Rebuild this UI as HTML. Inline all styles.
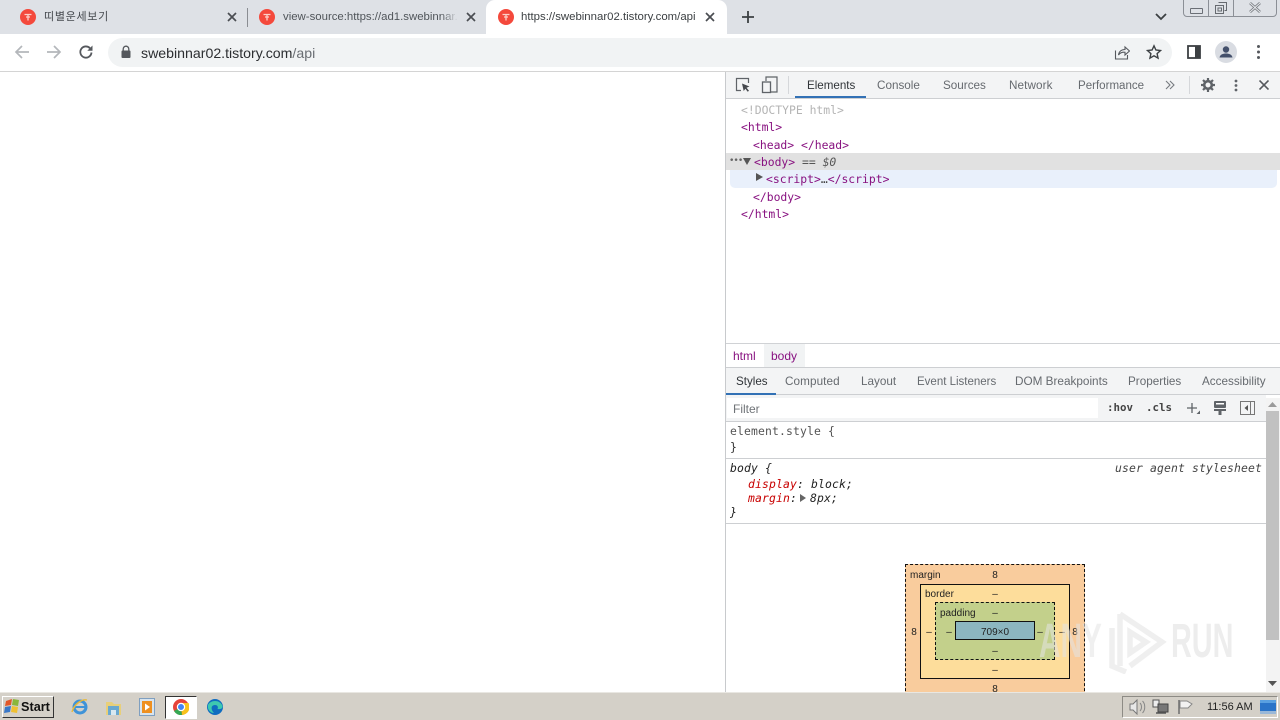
<!DOCTYPE html>
<html lang="en"><head><meta charset="utf-8"><title>swebinnar02</title>
<style>
html,body{margin:0;padding:0;background:#fff}
#p{position:relative;width:1280px;height:720px;overflow:hidden;background:#fff;font-family:"Liberation Sans",sans-serif;font-size:11.7px;color:#666a6f}
#p div,#p span.t,#p svg{position:absolute}
.t{position:absolute;white-space:nowrap;line-height:14px}
.m{font-family:"DejaVu Sans Mono",monospace;font-size:11.4px;line-height:14px;white-space:nowrap;position:absolute}
.s{letter-spacing:.14px}
.pu{color:#881280}.g{color:#a8a8a8}
.tab{font-size:12px;color:#555b62}
.bx{font-size:10px;color:#222;text-align:center;width:20px;margin-left:-10px}
.lb{font-size:10px;color:#222}
</style></head><body>
<div id="p">
<!-- tab strip -->
<div style="left:0;top:0;width:1280px;height:34px;background:#dee1e6"></div>
<div style="left:0;top:34px;width:1280px;height:37px;background:#fff"></div>
<div style="left:0;top:71px;width:1280px;height:1px;background:#d4d4d4"></div>
<div style="left:486px;top:0;width:241px;height:36px;background:#fff;border-radius:9px 9px 0 0"></div>
<div style="left:247px;top:8px;width:1px;height:19px;background:#8a8d92"></div>

<svg style="left:20px;top:9px" width="16" height="16" viewBox="0 0 16 16"><circle cx="8" cy="8" r="8" fill="#f4493c"/><path d="M4.500 5.500h7M8 5.500v6M6 8h4" stroke="#fcd0c8" stroke-width="1.300" fill="none"/></svg>
<span class="t" style="left:44px;top:10px;font-family:'Liberation Sans','Noto Sans CJK KR',sans-serif;font-size:11px;color:#45494e;letter-spacing:.7px">띠별운세보기</span>
<svg style="left:227px;top:12px" width="10" height="10" viewBox="0 0 10 10"><path d="M1 1l8 8M9 1l-8 8" stroke="#4a4d52" stroke-width="1.700"/></svg>

<svg style="left:259px;top:9px" width="16" height="16" viewBox="0 0 16 16"><circle cx="8" cy="8" r="8" fill="#f4493c"/><path d="M4.500 5.500h7M8 5.500v6M6 8h4" stroke="#fcd0c8" stroke-width="1.300" fill="none"/></svg>
<span class="t tab" style="left:283px;top:10px;font-size:11.400px;width:174px;overflow:hidden;color:#50555a">view-source:https://ad1.swebinnar.</span>
<div style="left:441px;top:6px;width:17px;height:22px;background:linear-gradient(90deg,rgba(222,225,230,0),#dee1e6)"></div>
<svg style="left:466px;top:12px" width="10" height="10" viewBox="0 0 10 10"><path d="M1 1l8 8M9 1l-8 8" stroke="#4a4d52" stroke-width="1.700"/></svg>

<svg style="left:498px;top:9px" width="16" height="16" viewBox="0 0 16 16"><circle cx="8" cy="8" r="8" fill="#f4493c"/><path d="M4.500 5.500h7M8 5.500v6M6 8h4" stroke="#fcd0c8" stroke-width="1.300" fill="none"/></svg>
<span class="t" style="left:521px;top:10px;font-size:11.400px;color:#3c4043">https://swebinnar02.tistory.com/api</span>
<svg style="left:705px;top:12px" width="10" height="10" viewBox="0 0 10 10"><path d="M1 1l8 8M9 1l-8 8" stroke="#4a4d52" stroke-width="1.700"/></svg>
<svg style="left:741px;top:10px" width="14" height="14" viewBox="0 0 14 14"><path d="M7 1v12M1 7h12" stroke="#3c4043" stroke-width="1.800"/></svg>
<svg style="left:1155px;top:13px" width="12" height="8" viewBox="0 0 12 8"><path d="M1 1l5 5 5-5" stroke="#3c4043" stroke-width="1.800" fill="none"/></svg>

<!-- window controls -->
<div style="left:1183px;top:-1px;width:92px;height:16px;border:1px solid #8b8f96;border-radius:0 0 4px 4px;background:#dee1e6"></div>
<div style="left:1208px;top:0;width:1px;height:16px;background:#8b8f96"></div>
<div style="left:1233px;top:0;width:1px;height:16px;background:#8b8f96"></div>
<div style="left:1190px;top:8px;width:11px;height:4px;border:1px solid #6b6f76;border-radius:1px"></div>
<svg style="left:1214px;top:1px" width="14" height="14" viewBox="0 0 14 14"><path d="M4.500 1.500h8v8h-2M1.500 4.500h8v8h-8zM4 7h3.500v3H4z" stroke="#666a70" fill="none"/></svg>
<svg style="left:1248px;top:1px" width="14" height="13" viewBox="0 0 14 13"><path d="M2 2l10 9M12 2L2 11" stroke="#777b80" stroke-width="2.600"/><path d="M2 2l10 9M12 2L2 11" stroke="#e8eaed" stroke-width="1"/></svg>

<!-- toolbar -->
<svg style="left:14px;top:44px" width="16" height="16" viewBox="0 0 16 16"><path d="M15 8H2M8 2L2 8l6 6" stroke="#b4b7bb" stroke-width="1.700" fill="none"/></svg>
<svg style="left:46px;top:44px" width="16" height="16" viewBox="0 0 16 16"><path d="M1 8h13M8 2l6 6-6 6" stroke="#b4b7bb" stroke-width="1.700" fill="none"/></svg>
<svg style="left:78px;top:44px" width="16" height="16" viewBox="0 0 16 16"><path d="M13.500 8.500A5.600 5.600 0 1 1 12 4.200" stroke="#55585d" stroke-width="1.800" fill="none"/><path d="M14.500 1.500v5.200H9.300z" fill="#55585d"/></svg>
<div style="left:108px;top:38px;width:1064px;height:29px;background:#f1f3f4;border-radius:15px"></div>
<svg style="left:120px;top:45px" width="12" height="14" viewBox="0 0 12 14"><path d="M3.200 6V4a2.800 2.800 0 0 1 5.600 0v2" stroke="#55585d" stroke-width="1.300" fill="none"/><rect x="1.500" y="5.500" width="9" height="7.500" rx="1" fill="#55585d"/></svg>
<span class="t" style="left:141px;top:45px;font-size:14.150px;line-height:16px;color:#2c2e31">swebinnar02.tistory.com<span style="color:#6a6e73">/api</span></span>
<svg style="left:1114px;top:44px" width="16" height="16" viewBox="0 0 16 16"><path d="M1.500 6.500v8.500h12V11M4.500 11c.5-3.500 3-5.500 6.500-5.500V3l4.500 4-4.500 4V8.300C8.500 8 6 9 4.500 11z" stroke="#55585d" stroke-width="1.100" fill="none"/></svg>
<svg style="left:1146px;top:44px" width="16" height="16" viewBox="0 0 16 16"><path d="M8 1.800l1.900 4.200 4.600.5-3.400 3.100.95 4.500L8 11.800 3.950 14.100l.95-4.500L1.500 6.500l4.600-.5z" stroke="#3c4043" stroke-width="1.400" fill="none"/></svg>
<svg style="left:1187px;top:45px" width="14" height="14" viewBox="0 0 14 14"><rect x="1" y="1" width="12" height="12" fill="none" stroke="#3c4043" stroke-width="1.800"/><rect x="8" y="1" width="5" height="12" fill="#3c4043"/></svg>
<svg style="left:1215px;top:41px" width="22" height="22" viewBox="0 0 22 22"><circle cx="11" cy="11" r="11" fill="#d9dce2"/><circle cx="11" cy="8.500" r="3.200" fill="#44506b"/><path d="M4.500 16.500c.5-3 3.500-4 6.500-4s6 1 6.500 4z" fill="#44506b"/></svg>
<svg style="left:1256px;top:44px" width="5" height="16" viewBox="0 0 5 16"><circle cx="2.500" cy="2.500" r="1.500" fill="#55585d"/><circle cx="2.500" cy="8" r="1.500" fill="#55585d"/><circle cx="2.500" cy="13.500" r="1.500" fill="#55585d"/></svg>

<!-- devtools -->
<div style="left:725px;top:72px;width:1px;height:620px;background:#c8cacd"></div>
<div style="left:726px;top:72px;width:554px;height:26px;background:#f3f4f5"></div>
<div style="left:726px;top:98px;width:554px;height:1px;background:#cdcfd2"></div>
<svg style="left:735px;top:77px" width="16" height="16" viewBox="0 0 16 16"><path d="M6 13.500H1.500v-12h12V6" stroke="#5f6368" stroke-width="1.200" fill="none"/><path d="M7 6.500l7.500 3-3 1.200 2.500 3-1.300 1-2.300-3-1.700 2.300z" fill="#45484d"/></svg>
<svg style="left:761px;top:76px" width="18" height="18" viewBox="0 0 18 18"><path d="M5 5V1h11v15H10" stroke="#5f6368" stroke-width="1.200" fill="none"/><rect x="1.500" y="6" width="8" height="10.500" fill="none" stroke="#5f6368" stroke-width="1.300"/></svg>
<div style="left:788px;top:76px;width:1px;height:18px;background:#d5d7da"></div>
<span class="t" style="left:807px;top:79px;color:#303438;font-size:11.600px">Elements</span>
<div style="left:795px;top:96px;width:71px;height:2px;background:#3271b5"></div>
<span class="t" style="left:877px;top:79px">Console</span>
<span class="t" style="left:943px;top:79px">Sources</span>
<span class="t" style="left:1009px;top:79px;letter-spacing:.1px">Network</span>
<span class="t" style="left:1078px;top:79px;font-size:11.550px">Performance</span>
<svg style="left:1165px;top:80px" width="10" height="10" viewBox="0 0 10 10"><path d="M1 1l4 4-4 4M5 1l4 4-4 4" stroke="#777b80" stroke-width="1.100" fill="none"/></svg>
<div style="left:1189px;top:76px;width:1px;height:18px;background:#d5d7da"></div>
<svg style="left:1201px;top:78px" width="14" height="14" viewBox="0 0 14 14"><circle cx="7" cy="7" r="3.800" fill="none" stroke="#5f6368" stroke-width="2.600"/><path d="M7 0v3M7 11v3M0 7h3M11 7h3M2 2l2 2M10 10l2 2M12 2l-2 2M4 10l-2 2" stroke="#5f6368" stroke-width="2.200"/></svg>
<svg style="left:1234px;top:79px" width="4" height="13" viewBox="0 0 4 13"><circle cx="2" cy="2" r="1.400" fill="#5f6368"/><circle cx="2" cy="6.500" r="1.400" fill="#5f6368"/><circle cx="2" cy="11" r="1.400" fill="#5f6368"/></svg>
<svg style="left:1259px;top:80px" width="10" height="10" viewBox="0 0 10 10"><path d="M.5.500l9 9M9.500.500l-9 9" stroke="#55585d" stroke-width="1.600"/></svg>

<!-- DOM tree -->
<div style="left:726px;top:153px;width:554px;height:17px;background:#e1e1e1"></div>
<div style="left:730px;top:170px;width:547px;height:18px;background:#e9f0fb;border-radius:0 0 5px 5px"></div>
<span class="m g" style="left:741px;top:103px;color:#b4b4b4">&lt;!DOCTYPE html&gt;</span>
<span class="m pu" style="left:741px;top:120px">&lt;html&gt;</span>
<span class="m pu" style="left:753px;top:138px">&lt;head&gt; &lt;/head&gt;</span>
<span class="m" style="left:729px;top:154px;color:#666;font-size:9px;letter-spacing:-1px">•••</span>
<svg style="left:743px;top:158px" width="8" height="7" viewBox="0 0 8 7"><path d="M0 0h8L4 7z" fill="#555"/></svg>
<span class="m pu" style="left:754px;top:155px">&lt;body&gt;</span>
<span class="m" style="left:802px;top:155px;color:#555">== <i>$0</i></span>
<svg style="left:756px;top:173px" width="7" height="8" viewBox="0 0 7 8"><path d="M0 0l7 4-7 4z" fill="#555"/></svg>
<span class="m pu" style="left:766px;top:172px">&lt;script&gt;<span style="color:#444">…</span>&lt;/script&gt;</span>
<span class="m pu" style="left:753px;top:190px">&lt;/body&gt;</span>
<span class="m pu" style="left:741px;top:207px">&lt;/html&gt;</span>

<!-- breadcrumb -->
<div style="left:726px;top:343px;width:554px;height:1px;background:#d0d2d5"></div>
<div style="left:764px;top:344px;width:41px;height:23px;background:#f1f3f4"></div>
<span class="t" style="left:733px;top:349px;color:#881280;font-size:12px">html</span>
<span class="t" style="left:771px;top:349px;color:#881280;font-size:12px">body</span>
<div style="left:726px;top:367px;width:554px;height:1px;background:#cdcfd2"></div>

<!-- sub tabs -->
<div style="left:726px;top:368px;width:554px;height:26px;background:#f3f4f5"></div>
<div style="left:726px;top:394px;width:554px;height:1px;background:#cdcfd2"></div>
<div style="left:726px;top:393px;width:50px;height:2px;background:#3271b5"></div>
<span class="t" style="left:736px;top:375px;color:#303438;font-size:11.600px">Styles</span>
<span class="t" style="left:785px;top:375px;letter-spacing:.1px">Computed</span>
<span class="t" style="left:861px;top:375px">Layout</span>
<span class="t" style="left:917px;top:375px;font-size:11.500px">Event Listeners</span>
<span class="t" style="left:1015px;top:375px;font-size:11.750px">DOM Breakpoints</span>
<span class="t" style="left:1128px;top:375px;font-size:11.700px">Properties</span>
<span class="t" style="left:1202px;top:375px;font-size:11.700px">Accessibility</span>

<!-- filter -->
<div style="left:726px;top:395px;width:540px;height:26px;background:#f3f4f5"></div>
<div style="left:727px;top:398px;width:371px;height:20px;background:#fff"></div>
<span class="t" style="left:733px;top:402px;color:#6f7377;font-size:12px">Filter</span>
<span class="m" style="left:1107px;top:401px;color:#444;font-size:10.800px;font-weight:bold">:hov</span>
<span class="m" style="left:1146px;top:401px;color:#444;font-size:10.800px;font-weight:bold">.cls</span>
<svg style="left:1186px;top:401px" width="18" height="17" viewBox="0 0 18 17"><path d="M6 2v10M1 7h10" stroke="#5f6368" stroke-width="1.300"/><path d="M14 13h-3.500l3.500-3.500z" fill="#5f6368"/></svg>
<svg style="left:1213px;top:400px" width="14" height="16" viewBox="0 0 14 16"><rect x="1" y="1" width="12" height="7" rx="1" fill="#5f6368"/><rect x="3" y="3" width="8" height="1.500" fill="#fff"/><path d="M1 9h12v2H1zM5.500 11h3v4h-3z" fill="#5f6368"/></svg>
<svg style="left:1240px;top:401px" width="15" height="14" viewBox="0 0 15 14"><rect x=".5" y=".5" width="14" height="13" fill="none" stroke="#777"/><path d="M10.500.5v13" stroke="#777"/><path d="M8 4v6L4.500 7z" fill="#555"/></svg>
<div style="left:726px;top:421px;width:540px;height:1px;background:#cdcfd2"></div>

<!-- styles -->
<span class="m s" style="left:730px;top:424px;color:#555">element.style {</span>
<span class="m" style="left:730px;top:440px;color:#333">}</span>
<div style="left:726px;top:458px;width:540px;height:1px;background:#cdcfd2"></div>
<span class="m s" style="left:730px;top:461px;color:#222;font-style:italic">body {</span>
<span class="m s" style="left:1115px;top:461px;color:#444;font-style:italic">user agent stylesheet</span>
<span class="m s" style="left:748px;top:477px;color:#222;font-style:italic"><span style="color:#c80000">display</span>: block;</span>
<span class="m s" style="left:748px;top:491px;color:#222;font-style:italic"><span style="color:#c80000">margin</span>:</span>
<svg style="left:800px;top:494px" width="6" height="8" viewBox="0 0 6 8"><path d="M0 0l6 4-6 4z" fill="#666"/></svg>
<span class="m s" style="left:810px;top:491px;color:#222;font-style:italic">8px;</span>
<span class="m" style="left:730px;top:505px;color:#222;font-style:italic">}</span>
<div style="left:726px;top:523px;width:540px;height:1px;background:#cdcfd2"></div>

<!-- box model -->
<div style="left:905px;top:564px;width:178px;height:140px;background:#f9cc9d;border:1px dashed #111"></div>
<div style="left:920px;top:584px;width:148px;height:93px;background:#fddd9b;border:1px solid #111"></div>
<div style="left:935px;top:602px;width:118px;height:56px;background:#c3d08b;border:1px dashed #111"></div>
<div style="left:955px;top:621px;width:78px;height:17px;background:#8cb6c0;border:1px solid #111"></div>
<span class="t lb" style="left:910px;top:569px">margin</span>
<span class="t lb" style="left:925px;top:588px">border</span>
<span class="t lb" style="left:940px;top:607px">padding</span>
<span class="t lb" style="left:981px;top:626px">709×0</span>
<span class="t bx" style="left:995px;top:569px">8</span>
<span class="t bx" style="left:995px;top:588px">–</span>
<span class="t bx" style="left:995px;top:607px">–</span>
<span class="t bx" style="left:995px;top:645px">–</span>
<span class="t bx" style="left:995px;top:664px">–</span>
<span class="t bx" style="left:995px;top:683px">8</span>
<span class="t bx" style="left:914px;top:626px">8</span>
<span class="t bx" style="left:929px;top:626px">–</span>
<span class="t bx" style="left:949px;top:626px">–</span>
<span class="t bx" style="left:1040px;top:626px">–</span>
<span class="t bx" style="left:1062px;top:626px">–</span>
<span class="t bx" style="left:1075px;top:626px">8</span>

<!-- scrollbar -->
<div style="left:1266px;top:398px;width:14px;height:294px;background:#f3f3f3"></div>
<div style="left:1266px;top:411px;width:13px;height:229px;background:#c1c1c1"></div>
<svg style="left:1268px;top:402px" width="9" height="5" viewBox="0 0 9 5"><path d="M4.500 0L9 5H0z" fill="#9a9a9a"/></svg>
<svg style="left:1268px;top:681px" width="9" height="5" viewBox="0 0 9 5"><path d="M0 0h9L4.500 5z" fill="#555"/></svg>

<!-- watermark -->
<span class="t" style="left:1039px;top:618px;font-size:48px;line-height:48px;color:rgba(228,228,228,.55);transform:scaleX(.62);transform-origin:0 0;font-weight:bold">ANY</span>
<span class="t" style="left:1171px;top:618px;font-size:48px;line-height:48px;color:rgba(205,205,205,.36);transform:scaleX(.6);transform-origin:0 0;font-weight:bold">RUN</span>
<svg style="left:1106px;top:608px" width="62" height="66" viewBox="0 0 62 66"><path d="M14 6v52M14 6l42 28-32 24M6 20v38l14 6M24 24l16 10-16 11z" stroke="rgba(205,205,205,.32)" stroke-width="5.500" fill="none"/></svg>

<!-- taskbar -->
<div style="left:0;top:692px;width:1280px;height:28px;background:#d4d0c8"></div>
<div style="left:0;top:692px;width:1280px;height:1px;background:#e9e7e2"></div>
<div style="left:2px;top:696px;width:50px;height:20px;background:#d4d0c8;border:1px solid;border-color:#fff #333 #333 #fff"></div>
<svg style="left:4px;top:698px" width="17" height="17" viewBox="0 0 17 17"><path d="M2 3l6-2-1 6-6 1z" fill="#e2582a"/><path d="M9 1l6 1-1 6-6-1z" fill="#8ab63a"/><path d="M1 9l6-1-1 6-6 1z" fill="#3a78c8"/><path d="M8 8l6 1-1 6-6-1z" fill="#f0c030"/></svg>
<span class="t" style="left:21px;top:700px;font-size:12.700px;font-weight:bold;color:#111">Start</span>
<svg style="left:71px;top:698px" width="18" height="18" viewBox="0 0 18 18"><circle cx="9" cy="9" r="6" fill="none" stroke="#3f93d8" stroke-width="3"/><path d="M4 9h10" stroke="#3f93d8" stroke-width="2"/><path d="M1 14C3 6 11 1 16 2" stroke="#e8b93a" stroke-width="1.400" fill="none"/></svg>
<svg style="left:105px;top:698px" width="17" height="18" viewBox="0 0 17 18"><path d="M1 4h6l2 2h7v11H1z" fill="#e8cf7a"/><rect x="3" y="8" width="11" height="9" fill="#6aa8d0"/><rect x="6" y="12" width="5" height="5" fill="#d8e8f0"/></svg>
<svg style="left:139px;top:698px" width="16" height="18" viewBox="0 0 16 18"><rect x=".5" y=".5" width="15" height="17" fill="#d8e4ee" stroke="#7f9fc0"/><rect x="3" y="3" width="10" height="12" fill="#ee9020"/><path d="M6 5.500l5 3.500-5 3.500z" fill="#fff"/></svg>
<div style="left:165px;top:696px;width:30px;height:21px;background:#fff;border:1px solid;border-color:#333 #fff #fff #333"></div>
<svg style="left:173px;top:699px" width="16" height="16" viewBox="0 0 16 16"><circle cx="8" cy="8" r="8" fill="#e5433a"/><path d="M8 8L1 12a8 8 0 0 0 8 4z" fill="#35a853"/><path d="M8 4h7.500a8 8 0 0 1-6.500 12z" fill="#f8c21c"/><circle cx="8" cy="8" r="3.600" fill="#4285f4" stroke="#fff" stroke-width="1.200"/></svg>
<svg style="left:207px;top:699px" width="16" height="16" viewBox="0 0 16 16"><circle cx="8" cy="8" r="8" fill="#0f6cc0"/><path d="M1 6C3 1 13 0 15.500 7c.5 3-3 3.500-5 3C12 7 9 5 6 6.500 4 7.500 4 11 7 14 3 14 0 10 1 6z" fill="#3ec8b0"/></svg>

<!-- tray -->
<div style="left:1122px;top:696px;width:154px;height:20px;border:1px solid;border-color:#8d8b85 #fff #fff #8d8b85"></div>
<svg style="left:1128px;top:699px" width="18" height="16" viewBox="0 0 18 16"><path d="M2 5h3l4-4v14l-4-4H2z" fill="#e8e8e8" stroke="#777"/><path d="M12 4c2 2 2 6 0 8M14.500 2c3 3 3 9 0 12" stroke="#888" fill="none"/></svg>
<svg style="left:1152px;top:699px" width="18" height="16" viewBox="0 0 18 16"><rect x="1" y="1" width="6" height="7" fill="#eee" stroke="#555"/><rect x="6" y="5" width="10" height="8" fill="#777" stroke="#444"/><path d="M4 14h10" stroke="#555" stroke-width="1.500"/></svg>
<svg style="left:1177px;top:699px" width="17" height="16" viewBox="0 0 17 16"><path d="M2 1v14" stroke="#666" stroke-width="1.400"/><path d="M3 2h7l5 3-4 4H3z" fill="#f2f2f2" stroke="#888"/></svg>
<span class="t" style="left:1207px;top:700px;font-size:11px;color:#222">11:56 AM</span>
<svg style="left:1260px;top:700px" width="16" height="14" viewBox="0 0 16 14"><rect width="16" height="11" fill="#2b74c8"/><rect y="11" width="16" height="3" fill="#9ab8d8"/><rect x="0" y="0" width="16" height="3" fill="#5aa0e0"/></svg>
</div>
</body></html>
